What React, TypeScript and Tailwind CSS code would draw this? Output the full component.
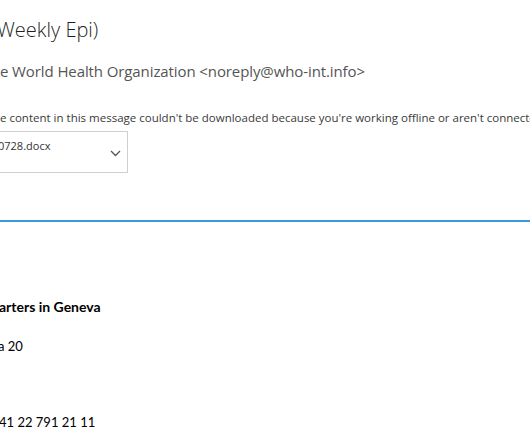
import React from "react";

// Text that sits to the left of the window edge: a zero-width box whose
// content overflows leftwards, so the visible part starts where the line starts.
function Clipped({ children }: { children: React.ReactNode }) {
  return (
    <span className="inline-flex w-0 justify-end whitespace-nowrap">{children}</span>
  );
}

function Chevron() {
  return (
    <svg width="11" height="7" viewBox="0 0 11 7" fill="none" aria-hidden>
      <path d="M1 1L5.5 5.5L10 1" stroke="#555" strokeWidth="1.3" />
    </svg>
  );
}

export default function App() {
  return (
    <div className="h-[443px] w-[530px] overflow-hidden bg-white">
      {/* Header */}
      <div className="flex flex-col">
        <div className="ml-[-3px] mt-[15px] whitespace-nowrap font-['Open_Sans',sans-serif] text-[20px] font-light leading-[30px] text-[#1f1f1f]">
          <Clipped>COVID-19 Situation Update (</Clipped>
          Weekly Epi)
        </div>

        <div className="mt-[16px] whitespace-nowrap font-['Open_Sans',sans-serif] text-[15px] tracking-[-0.1px] leading-[20px] text-[#555]">
          <Clipped>From: Th</Clipped>
          e World Health Organization &lt;noreply@who-int.info&gt;
        </div>

        <div className="mt-[29px] whitespace-nowrap font-['Open_Sans',sans-serif] text-[11.5px] leading-[16px] text-[#3a3a3a]">
          <Clipped>Som</Clipped>
          e content in this message couldn't be downloaded because you're working offline or aren't connected to the server.
        </div>

        {/* Attachment */}
        <div className="ml-[-120px] mt-[5px] flex h-[42px] w-[248px] items-start justify-between border border-[#cfcfcf] pl-[117px] pr-[6px]">
          <div className="mt-[7px] whitespace-nowrap font-['Open_Sans',sans-serif] text-[11px] leading-[14px] text-[#333]">
            <Clipped>COVID-19_Weekly_Epi_Update_2020</Clipped>
            0728.docx
          </div>
          <div className="mb-[15px] flex self-end">
            <Chevron />
          </div>
        </div>
      </div>

      {/* Divider */}
      <div className="mt-[47px] h-[2px] w-full bg-[#3a9bd8]" />

      {/* Body */}
      <div className="flex flex-col font-['Lato',sans-serif] text-[13px] text-[#000]">
        <div className="ml-[-1px] mt-[76px] whitespace-nowrap text-[14px] font-bold leading-[18px]">
          <Clipped>Headqu</Clipped>
          arters in Geneva
        </div>
        <div className="ml-[-2px] mt-[21px] whitespace-nowrap leading-[18px]">
          <Clipped>Avenue Appi</Clipped>
          a 20
        </div>
        <div className="ml-[-1px] mt-[58px] whitespace-nowrap leading-[18px]">
          <Clipped>Telephone: +</Clipped>
          41 22 791 21 11
        </div>
      </div>
    </div>
  );
}
